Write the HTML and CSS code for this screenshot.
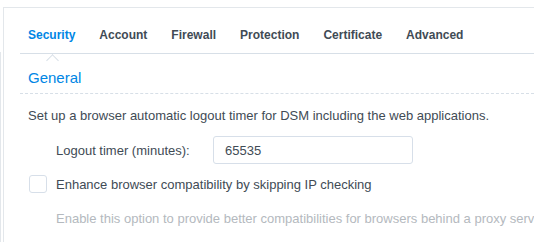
FILE: index.html
```html
<!DOCTYPE html>
<html lang="en">
<head>
    <meta charset="UTF-8">
    <title>Security</title>
    <link rel="stylesheet" href="styles.css">
</head>
<body>
    <div class="outer">
        <div class="panel">
            <ul class="tabs">
                <li class="tab active">Security</li>
                <li class="tab">Account</li>
                <li class="tab">Firewall</li>
                <li class="tab">Protection</li>
                <li class="tab">Certificate</li>
                <li class="tab">Advanced</li>
            </ul>
            <div class="section">
                <h2 class="section-title">General</h2>
                <p class="desc">Set up a browser automatic logout timer for DSM including the web applications.</p>
                <div class="field">
                    <label class="field-label">Logout timer (minutes):</label>
                    <input type="text" class="field-input" value="65535">
                </div>
                <div class="check-row">
                    <span class="checkbox"></span>
                    <span class="check-label">Enhance browser compatibility by skipping IP checking</span>
                </div>
                <p class="hint">Enable this option to provide better compatibilities for browsers behind a proxy server.</p>
            </div>
        </div>
    </div>
</body>
</html>
```

FILE: styles.css
```css
*{
    margin : 0;
    padding : 0;
    box-sizing : border-box;
}
ul{
    list-style : none;
}
body{
    font-family : "Liberation Sans", Arial, sans-serif;
    color : #414b55;
    background-color : #fff;
    width : 534px;
    height : 242px;
    overflow : hidden;
}
.outer{
    height : 242px;
    padding-top : 7px;
    padding-left : 3px;
    background : linear-gradient(#e3e7eb, #e3e7eb) no-repeat 0 52px / 1px 100%;
}
.panel{
    height : 240px;
    border-top : 1px solid #e3e7eb;
    border-left : 1px solid #e3e7eb;
    padding-left : 16px;
    white-space : nowrap;
}
.tabs{
    display : flex;
    height : 46px;
    border-bottom : 1px solid #d7dfe7;
    padding-left : 8px;
}
.tab{
    position : relative;
    font-size : 12px;
    font-weight : bold;
    line-height : 14px;
    padding-top : 20px;
    margin-right : 24px;
    color : #414b55;
}
.tab.active{
    color : #0086e5;
}
.tab.active::after{
    content : "";
    position : absolute;
    left : 20px;
    bottom : -12px;
    width : 8px;
    height : 8px;
    background-color : #fff;
    border-top : 1px solid #d7dfe7;
    border-left : 1px solid #d7dfe7;
    transform : rotate(45deg);
}
.section{
    padding-left : 8px;
}
.section-title{
    font-size : 15px;
    font-weight : normal;
    color : #0086e5;
    line-height : 18px;
    padding-top : 15px;
    padding-bottom : 6px;
    margin-left : -8px;
    padding-left : 8px;
    border-bottom : 1px dashed #d7dfe7;
}
.desc{
    font-size : 13px;
    line-height : 16px;
    margin-top : 14px;
}
.field{
    display : flex;
    align-items : center;
    margin-top : 12px;
    padding-left : 28px;
}
.field-label{
    font-size : 13px;
    width : 157px;
}
.field-input{
    width : 200px;
    height : 28px;
    border : 1px solid #d7dfe9;
    border-radius : 3px;
    padding-left : 11px;
    font-family : "Liberation Sans", Arial, sans-serif;
    font-size : 13px;
    color : #414b55;
    outline : none;
}
.check-row{
    display : flex;
    align-items : center;
    margin-top : 11px;
}
.checkbox{
    width : 18px;
    height : 18px;
    border : 1px solid #d7dfe9;
    border-radius : 3px;
    margin-left : 1px;
    margin-right : 9px;
}
.check-label{
    font-size : 13px;
}
.hint{
    font-size : 13px;
    color : #b4b9be;
    margin-top : 18px;
    padding-left : 28px;
}
```
